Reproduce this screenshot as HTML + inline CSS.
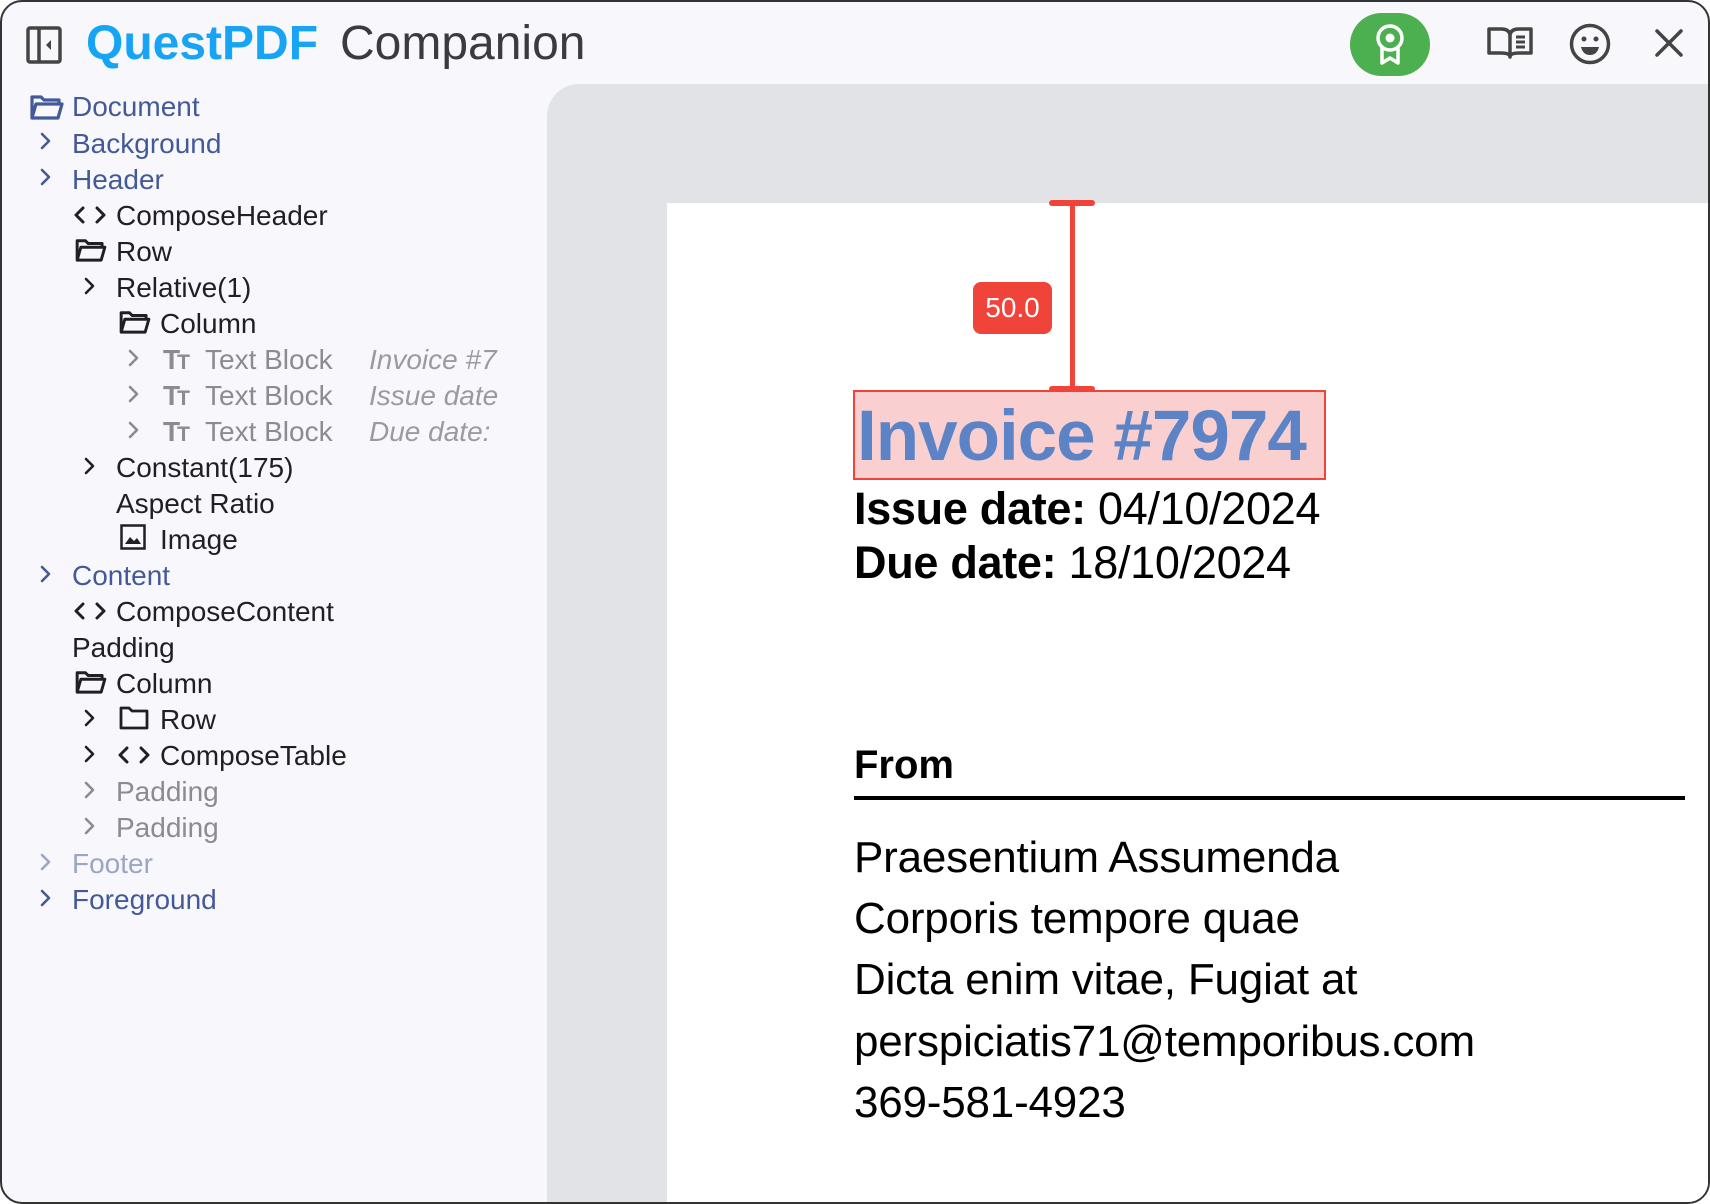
<!DOCTYPE html>
<html><head><meta charset="utf-8">
<style>
*{margin:0;padding:0;box-sizing:border-box}
html,body{width:1710px;height:1204px;overflow:hidden}
body{background:#fff;font-family:"Liberation Sans",sans-serif}
.win{position:absolute;left:0;top:0;width:1710px;height:1204px;background:#f8f8fc;border:2px solid #333;border-radius:22px;overflow:hidden}
.a{position:absolute;white-space:nowrap}
.t{position:absolute;font-size:28px;line-height:36px;white-space:nowrap}
.b{color:#44599a}.k{color:#1f1f24}.g{color:#8c8c90}.f{color:#9aa6c6}
.i{font-style:italic;color:#9a9aa0}
svg{position:absolute;overflow:visible}
</style></head><body>
<div class="win">
<svg style="left:24px;top:24px" width="36" height="38" viewBox="0 0 36 38"><rect x="2" y="2" width="32" height="34" rx="2" fill="none" stroke="#444" stroke-width="3.5"/><line x1="13" y1="2" x2="13" y2="36" stroke="#444" stroke-width="3.5"/><path d="M25 14 L20 19 L25 24Z" fill="#444"/></svg>
<div class="a" style="left:84px;top:14px;font-size:48px;font-weight:bold;color:#17a4f5;line-height:56px">QuestPDF</div>
<div class="a" style="left:338px;top:14px;font-size:48px;color:#3a3a40;line-height:56px">Companion</div>
<div class="a" style="left:1348px;top:11px;width:80px;height:63px;border-radius:32px;background:#4caf50"></div>
<svg style="left:1372px;top:21px" width="32" height="44" viewBox="0 0 32 44"><circle cx="16" cy="15" r="12" fill="none" stroke="#fff" stroke-width="3.5"/><circle cx="16" cy="15" r="4.5" fill="#fff"/><path d="M8 25 V40 L16 35 L24 40 V25" fill="none" stroke="#fff" stroke-width="3.5" stroke-linejoin="round"/></svg>
<svg style="left:1485px;top:24px" width="46" height="34" viewBox="0 0 46 34"><path d="M2 3 H14 Q23 3 23 10 V31 Q23 27 14 27 H2Z M44 3 H32 Q23 3 23 10 V31 Q23 27 32 27 H44Z" fill="none" stroke="#444" stroke-width="3.5" stroke-linejoin="round"/><path d="M29 11 H38 M29 16 H38 M29 21 H38" stroke="#444" stroke-width="3"/></svg>
<svg style="left:1567px;top:21px" width="42" height="42" viewBox="0 0 42 42"><circle cx="21" cy="21" r="18.5" fill="none" stroke="#444" stroke-width="3.5"/><circle cx="15" cy="16" r="2.5" fill="#444"/><circle cx="27" cy="16" r="2.5" fill="#444"/><path d="M12 24 H30 Q28 32 21 32 Q14 32 12 24Z" fill="#444"/></svg>
<svg style="left:1653px;top:27px" width="28" height="28" viewBox="0 0 28 28"><path d="M2 2 L26 26 M26 2 L2 26" stroke="#444" stroke-width="3.5" stroke-linecap="round"/></svg>

<svg width="0" height="0" style="position:absolute"><defs>
<path id="ch" d="M0 0 L7 7 L0 14" fill="none" stroke-width="2.6" stroke-linecap="round" stroke-linejoin="round"/>
<path id="cd" d="M9 1 L2 8 L9 15 M23 1 L30 8 L23 15" fill="none" stroke-width="3" stroke-linecap="round" stroke-linejoin="round"/>
<path id="fo" d="M2 24 V3 H11 L14 6 H29 V10 M2 24 L6 10 H32 L28 24Z" fill="none" stroke-width="3.2" stroke-linejoin="round"/>
</defs></svg>

<svg style="left:28px;top:92px" width="34" height="26" viewBox="0 0 34 26" stroke="#44599a"><use href="#fo"/></svg>
<div class="t b" style="left:70px;top:87px">Document</div>
<svg style="left:40px;top:132px" width="8" height="14" stroke="#44599a"><use href="#ch"/></svg><div class="t b" style="left:70px;top:124px">Background</div>
<svg style="left:40px;top:168px" width="8" height="14" stroke="#44599a"><use href="#ch"/></svg><div class="t b" style="left:70px;top:160px">Header</div>
<svg style="left:72px;top:205px" width="32" height="16" stroke="#1f1f24"><use href="#cd"/></svg><div class="t k" style="left:114px;top:196px">ComposeHeader</div>
<svg style="left:73px;top:236px" width="32" height="24" viewBox="0 0 34 26" stroke="#1f1f24"><use href="#fo"/></svg>
<div class="t k" style="left:114px;top:232px">Row</div>
<svg style="left:84px;top:277px" width="8" height="14" stroke="#1f1f24"><use href="#ch"/></svg><div class="t k" style="left:114px;top:268px">Relative(1)</div>
<svg style="left:117px;top:308px" width="32" height="24" viewBox="0 0 34 26" stroke="#1f1f24"><use href="#fo"/></svg>
<div class="t k" style="left:158px;top:304px">Column</div>

<svg style="left:128px;top:349px" width="8" height="14" stroke="#8c8c90"><use href="#ch"/></svg><div class="t g" style="left:161px;top:340px;font-weight:bold;letter-spacing:-3px">T<span style="font-size:21px">T</span></div><div class="t g" style="left:203px;top:340px">Text Block</div><div class="t i" style="left:367px;top:340px">Invoice #7</div>
<svg style="left:128px;top:385px" width="8" height="14" stroke="#8c8c90"><use href="#ch"/></svg><div class="t g" style="left:161px;top:376px;font-weight:bold;letter-spacing:-3px">T<span style="font-size:21px">T</span></div><div class="t g" style="left:203px;top:376px">Text Block</div><div class="t i" style="left:367px;top:376px">Issue date</div>
<svg style="left:128px;top:421px" width="8" height="14" stroke="#8c8c90"><use href="#ch"/></svg><div class="t g" style="left:161px;top:412px;font-weight:bold;letter-spacing:-3px">T<span style="font-size:21px">T</span></div><div class="t g" style="left:203px;top:412px">Text Block</div><div class="t i" style="left:367px;top:412px">Due date:</div>

<svg style="left:84px;top:457px" width="8" height="14" stroke="#1f1f24"><use href="#ch"/></svg><div class="t k" style="left:114px;top:448px">Constant(175)</div>
<div class="t k" style="left:114px;top:484px">Aspect Ratio</div>
<svg style="left:118px;top:522px" width="26" height="26" viewBox="0 0 26 26"><rect x="1.5" y="1.5" width="23" height="23" fill="none" stroke="#1f1f24" stroke-width="2.5"/><path d="M5 20 L10 13 L14 17 L17 14 L21 20Z" fill="#1f1f24"/></svg>
<div class="t k" style="left:158px;top:520px">Image</div>
<svg style="left:40px;top:565px" width="8" height="14" stroke="#44599a"><use href="#ch"/></svg><div class="t b" style="left:70px;top:556px">Content</div>
<svg style="left:72px;top:601px" width="32" height="16" stroke="#1f1f24"><use href="#cd"/></svg><div class="t k" style="left:114px;top:592px">ComposeContent</div>
<div class="t k" style="left:70px;top:628px">Padding</div>
<svg style="left:73px;top:668px" width="32" height="24" viewBox="0 0 34 26" stroke="#1f1f24"><use href="#fo"/></svg>
<div class="t k" style="left:114px;top:664px">Column</div>
<svg style="left:84px;top:709px" width="8" height="14" stroke="#1f1f24"><use href="#ch"/></svg>
<svg style="left:117px;top:704px" width="30" height="24" viewBox="0 0 30 24"><path d="M2 22 V2 H10 L13 5 H28 V22Z" fill="none" stroke="#1f1f24" stroke-width="2.8" stroke-linejoin="round"/></svg>
<div class="t k" style="left:158px;top:700px">Row</div>
<svg style="left:84px;top:745px" width="8" height="14" stroke="#1f1f24"><use href="#ch"/></svg><svg style="left:116px;top:745px" width="32" height="16" stroke="#1f1f24"><use href="#cd"/></svg><div class="t k" style="left:158px;top:736px">ComposeTable</div>
<svg style="left:84px;top:781px" width="8" height="14" stroke="#8c8c90"><use href="#ch"/></svg><div class="t g" style="left:114px;top:772px">Padding</div>
<svg style="left:84px;top:817px" width="8" height="14" stroke="#8c8c90"><use href="#ch"/></svg><div class="t g" style="left:114px;top:808px">Padding</div>
<svg style="left:40px;top:853px" width="8" height="14" stroke="#9aa6c6"><use href="#ch"/></svg><div class="t f" style="left:70px;top:844px">Footer</div>
<svg style="left:40px;top:889px" width="8" height="14" stroke="#44599a"><use href="#ch"/></svg><div class="t b" style="left:70px;top:880px">Foreground</div>

<div class="a" style="left:545px;top:82px;width:1165px;height:1122px;background:#e2e3e7;border-top-left-radius:32px"></div>
<div class="a" style="left:665px;top:201px;width:1045px;height:1003px;background:#fff"></div>
<div class="a" style="left:851px;top:388px;width:473px;height:90px;background:#f9d0cf;border:2px solid #f0443a"></div>
<div class="a" style="left:855px;top:385px;font-size:71px;font-weight:bold;color:#5b83c6;line-height:100px;letter-spacing:-1px">Invoice #7974</div>
<div class="a" style="left:1068px;top:201px;width:5px;height:187px;background:#f0443a"></div>
<div class="a" style="left:1047px;top:198px;width:46px;height:6px;border-radius:3px;background:#f0443a"></div>
<div class="a" style="left:1047px;top:384px;width:46px;height:6px;border-radius:3px;background:#f0443a"></div>
<div class="a" style="left:971px;top:280px;width:79px;height:52px;border-radius:8px;background:#f0443a;color:#fff;font-size:28px;line-height:52px;text-align:center">50.0</div>
<div class="a" style="left:852px;top:479px;font-size:45px;line-height:56px;color:#000;letter-spacing:-0.3px"><b>Issue date:</b> 04/10/2024</div>
<div class="a" style="left:852px;top:533px;font-size:45px;line-height:56px;color:#000;letter-spacing:-0.3px"><b>Due date:</b> 18/10/2024</div>
<div class="a" style="left:852px;top:737px;font-size:40px;line-height:52px;color:#000;font-weight:bold">From</div>
<div class="a" style="left:852px;top:794px;width:831px;height:4px;background:#000"></div>
<div class="a" style="left:852px;top:825px;font-size:44px;line-height:61.2px;color:#000;letter-spacing:-0.2px">Praesentium Assumenda<br>Corporis tempore quae<br>Dicta enim vitae, Fugiat at<br>perspiciatis71@temporibus.com<br>369-581-4923</div>
</div>
</body></html>
